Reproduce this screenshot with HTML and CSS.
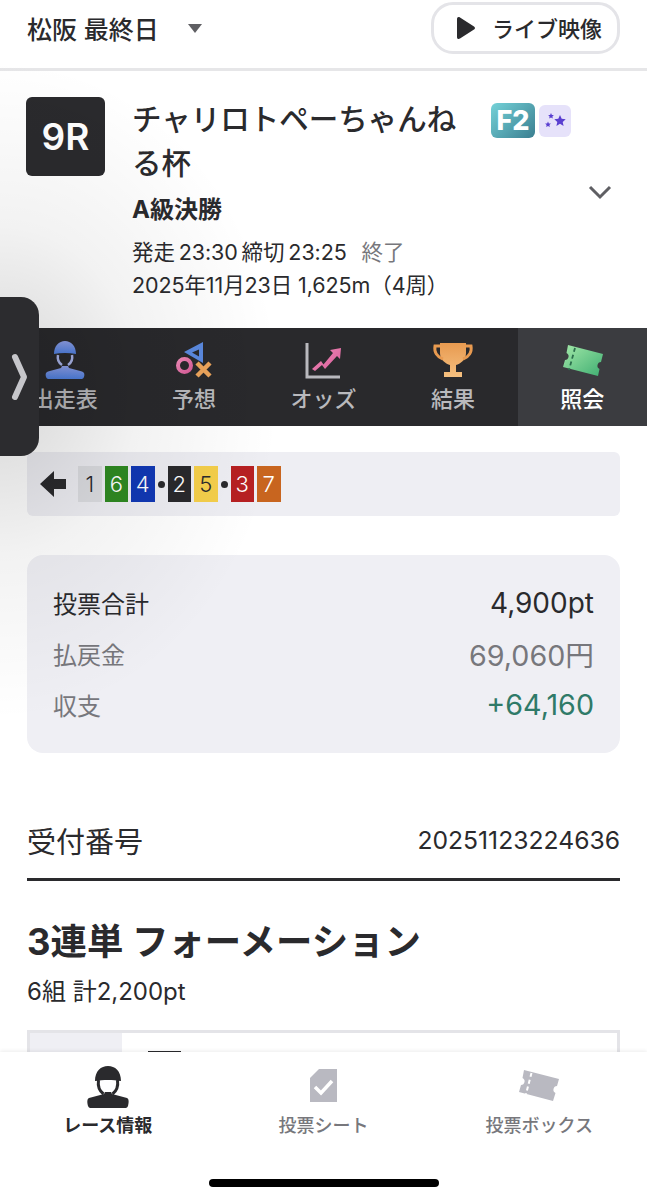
FILE: index.html
```html
<!DOCTYPE html>
<html lang="ja">
<head>
    <meta charset="utf-8">
    <title>レース情報</title>
    <link rel="stylesheet" href="styles.css">
</head>
<body>
<svg class="defs" width="0" height="0">
    <defs>
        <linearGradient id="g-blue" x1="0" y1="0" x2="0" y2="1"><stop offset="0" stop-color="#8fa0e8"/><stop offset="1" stop-color="#4f80e0"/></linearGradient>
        <linearGradient id="g-pink" x1="0" y1="0" x2="1" y2="1"><stop offset="0" stop-color="#f08ab8"/><stop offset="1" stop-color="#d85c98"/></linearGradient>
        <linearGradient id="g-orange" x1="0" y1="0" x2="0" y2="1"><stop offset="0" stop-color="#e89a50"/><stop offset="1" stop-color="#f5c080"/></linearGradient>
        <linearGradient id="g-green" x1="0" y1="0" x2="1" y2="1"><stop offset="0" stop-color="#a2e8a8"/><stop offset="1" stop-color="#3fae72"/></linearGradient>
    </defs>
</svg>

<div class="page">
    <header class="top">
        <div class="venue">松阪 最終日<span class="caret"></span></div>
        <div class="live">
            <svg width="20" height="24" viewBox="0 0 20 24"><path d="M1 3c0-2 1.500-2.500 3-1.600l14 9c1.300.8 1.300 2.400 0 3.200l-14 9c-1.500.9-3 .4-3-1.600z" fill="#2a2a2d"/></svg>
            <span>ライブ映像</span>
        </div>
    </header>

    <section class="race">
        <div class="race-no">9R</div>
        <div class="race-info">
            <h1 class="race-name">チャリロトペーちゃんねる杯</h1>
            <div class="race-grade">A級決勝</div>
            <div class="race-meta tight">発走 23:30 締切 23:25 <span class="ended">終了</span></div>
            <div class="race-meta">2025年11月23日 1,625m（4周）</div>
        </div>
        <div class="race-side">
            <div class="badges">
                <div class="badge-f2">F2</div>
                <div class="badge-star">
                    <svg width="24" height="18" viewBox="0 0 24 18" fill="#5a3fd0">
                        <path d="M17 3l1.700 3.800 4 .4-3 2.700.9 4-3.600-2.100-3.600 2.100.9-4-3-2.700 4-.4z"/>
                        <path d="M8 1l.9 1.900 2 .2-1.500 1.400.4 2L8 5.500 6.200 6.500l.4-2L5.100 3.100l2-.2z"/>
                        <path d="M5 9.500l.9 1.900 2 .2-1.500 1.400.4 2L5 14 3.200 15l.4-2-1.500-1.400 2-.2z"/>
                    </svg>
                </div>
            </div>
            <svg class="chevron" width="24" height="15" viewBox="0 0 24 15"><path d="M2 2l10 10L22 2" fill="none" stroke="#5f5f63" stroke-width="3"/></svg>
        </div>
    </section>

    <nav class="tabs">
        <div class="tab">
            <svg width="44" height="40" viewBox="0 0 44 40">
                <path d="M11 14C11 6 16 1 22 1s11 5 11 13c-7-1.500-15-1.500-22 0z" fill="url(#g-blue)"/>
                <path d="M15 15c-1 5 1 8 4 10M29 15c1 5-1 8-4 10" fill="none" stroke="#a9b4e8" stroke-width="2.500"/>
                <path d="M3 37c-1-3 0-5 2-5.500l13-3.500 1-2h6l1 2 13 3.500c2 .5 3 2.500 2 5.500-1 2-2 2-3 2H6c-1 0-2 0-3-2z" fill="url(#g-blue)"/>
            </svg>
            <span>出走表</span>
        </div>
        <div class="tab">
            <svg width="44" height="40" viewBox="0 0 44 40">
                <path d="M31 2v21L12 12z M27 9.500L20 12.500l7 4z" fill="#5b8ae0" fill-rule="evenodd"/>
                <circle cx="12.500" cy="25.500" r="6.500" fill="none" stroke="url(#g-pink)" stroke-width="4"/>
                <path d="M25 23l13 13M38 23L25 36" stroke="#eda55c" stroke-width="4.500" fill="none"/>
            </svg>
            <span>予想</span>
        </div>
        <div class="tab">
            <svg width="44" height="40" viewBox="0 0 44 40">
                <path d="M6 3v34h33" fill="none" stroke="#b9b9be" stroke-width="3"/>
                <path d="M11 29l9-8 2.500 3.500L32 13l-3-3 11-2-1 11-3-3-12 13-3-4-7 6z" fill="url(#g-pink)"/>
            </svg>
            <span>オッズ</span>
        </div>
        <div class="tab">
            <svg width="44" height="40" viewBox="0 0 44 40">
                <path d="M9 3h26v10c0 7-6 11-10 12v7h6v5H13v-5h6v-7C15 24 9 20 9 13z" fill="url(#g-orange)"/>
                <path d="M9 6H4c-1 6 2 11 8 13M35 6h5c1 6-2 11-8 13" fill="none" stroke="#e89a50" stroke-width="3"/>
            </svg>
            <span>結果</span>
        </div>
        <div class="tab active">
            <svg width="44" height="40" viewBox="0 0 44 40">
                <path d="M8 5l35 9-2 8c-2 0-3 1-3.500 3s.5 3 2 4L38 36 3 27l2-7c2 0 3-1 3.500-3s-.5-3-2-4z" fill="url(#g-green)"/>
                <path d="M15 8L9 30" stroke="#2a6e4c" stroke-width="1.800" stroke-dasharray="4 3"/>
            </svg>
            <span>照会</span>
        </div>
    </nav>

    <main class="content">
        <div class="combo">
            <svg class="back" width="27" height="26" viewBox="0 0 27 26"><path d="M0 13L14 0v8h12v10H14v8z" fill="#2a2a2d"/></svg>
            <span class="num n1">1</span>
            <span class="num n6">6</span>
            <span class="num n4">4</span>
            <span class="dot"></span>
            <span class="num n2">2</span>
            <span class="num n5">5</span>
            <span class="dot"></span>
            <span class="num n3">3</span>
            <span class="num n7">7</span>
        </div>

        <div class="summary">
            <div class="sum-row"><span>投票合計</span><span class="sum-val dark">4,900pt</span></div>
            <div class="sum-row muted"><span>払戻金</span><span class="sum-val">69,060円</span></div>
            <div class="sum-row muted"><span>収支</span><span class="sum-val plus">+64,160</span></div>
        </div>

        <div class="receipt">
            <span class="receipt-label">受付番号</span>
            <span class="receipt-no">20251123224636</span>
        </div>

        <h2 class="bet-title">3連単 フォーメーション</h2>
        <div class="bet-sub">6組 計2,200pt</div>

        <div class="bet-table">
            <div class="bet-head"></div>
            <div class="bet-cell"><span class="bet-box"></span></div>
        </div>
    </main>

    <div class="side-shade"></div>
    <div class="side-handle">
        <svg width="18" height="48" viewBox="0 0 18 48"><path d="M4 4l9 20-9 20" fill="none" stroke="#c6c6ca" stroke-width="6" stroke-linecap="round" stroke-linejoin="round"/></svg>
    </div>

    <footer class="bottom">
        <div class="bottom-tabs">
            <div class="bottom-tab on">
                <svg width="44" height="46" viewBox="0 0 44 46">
                    <path d="M9 17C9 7 15 2 22 2s13 5 13 15c-8-1.500-18-1.500-26 0z" fill="#2a2a2d"/>
                    <path d="M12.500 16c-1 7 1 11 5 14M31.500 16c1 7-1 11-5 14" fill="none" stroke="#2a2a2d" stroke-width="3"/>
                    <path d="M2 42c-1-4-1-7 1-8l15-4 1-2h6l1 2 15 4c2 1 2 4 1 8-1 2-2 2-3 2H5c-1 0-2 0-3-2z" fill="#2a2a2d"/>
                </svg>
                <span>レース情報</span>
            </div>
            <div class="bottom-tab">
                <svg width="44" height="46" viewBox="0 0 44 46">
                    <path d="M18 5h18v33H9V14z" fill="#b9b9c1"/>
                    <path d="M14 23l6 6 11-12" fill="none" stroke="#fff" stroke-width="3.500"/>
                </svg>
                <span>投票シート</span>
            </div>
            <div class="bottom-tab">
                <svg width="44" height="46" viewBox="0 0 44 46">
                    <path d="M7 6l35 9-2 7c-2 0-3 1-3.500 3s.5 3 2 4L36 37 2 28l2-7c2 0 3-1 3.500-3s-.5-3-2-4z" fill="#b9b9c1"/>
                    <path d="M14.500 9L9 30" stroke="#fff" stroke-width="2" stroke-dasharray="4 3"/>
                </svg>
                <span>投票ボックス</span>
            </div>
        </div>
        <div class="home-bar"></div>
    </footer>
</div>
</body>
</html>
```

FILE: styles.css
```css
html, body {
    margin: 0;
    padding: 0;
    background-color: #fff;
}

body {
    font-family: Inter, "Noto Sans CJK JP", sans-serif;
    color: #2a2a2d;
}

.defs {
    position: absolute;
}

.page {
    position: relative;
    width: 647px;
    height: 1200px;
    overflow: hidden;
}

/* top bar */
.top {
    display: flex;
    align-items: center;
    justify-content: space-between;
    height: 68px;
    padding: 0 27px;
    border-bottom: 3px solid #e6e6e8;
}

.venue {
    display: flex;
    align-items: center;
    font-size: 25px;
    font-weight: 500;
    margin-top: -12px;
}

.caret {
    width: 0;
    height: 0;
    margin-left: 29px;
    margin-top: 1px;
    border-left: 7px solid transparent;
    border-right: 7px solid transparent;
    border-top: 9px solid #5f5f63;
}

.live {
    display: flex;
    align-items: center;
    gap: 16px;
    width: 189px;
    height: 52px;
    box-sizing: border-box;
    padding-left: 22px;
    margin-top: -12px;
    border: 3px solid #e4e4e8;
    border-radius: 22px;
    font-size: 22px;
    font-weight: 500;
}

.live span {
    margin-top: -3px;
}

/* race header */
.race {
    display: flex;
    height: 257px;
    box-sizing: border-box;
    padding: 26px 27px 0 26px;
}

.race-no {
    flex: none;
    width: 79px;
    height: 79px;
    border-radius: 6px;
    background-color: #2a2a2d;
    color: #fff;
    text-align: center;
    line-height: 80px;
    font-size: 37px;
    font-weight: 600;
}

.race-info {
    width: 333px;
    margin-left: 27px;
}

.race-name {
    margin: 0;
    font-size: 29.5px;
    line-height: 44px;
    font-weight: 500;
}

.race-grade {
    font-size: 24px;
    line-height: 50px;
    font-weight: 700;
    margin-bottom: 1px;
}

.race-meta {
    font-size: 21.5px;
    line-height: 33px;
    white-space: nowrap;
    letter-spacing: -0.1px;
}

.tight {
    word-spacing: -2px;
}

.ended {
    margin-left: 11px;
    color: #77777c;
}

.race-side {
    flex: 1;
    padding-left: 26px;
}

.badges {
    display: flex;
    align-items: center;
    gap: 4px;
    margin-top: 6px;
}

.badge-f2 {
    width: 44px;
    height: 35px;
    border-radius: 6px;
    background: linear-gradient(135deg, #74d2d8, #3a7e90);
    color: #fff;
    text-align: center;
    font-size: 27px;
    line-height: 35px;
    font-weight: 800;
}

.badge-star {
    display: flex;
    align-items: center;
    justify-content: center;
    width: 32px;
    height: 32px;
    border-radius: 6px;
    background-color: #e6e2fa;
}

.chevron {
    display: block;
    margin: 47px 0 0 97px;
}

/* dark tabs */
.tabs {
    display: grid;
    grid-template-columns: repeat(5, 1fr);
    height: 98px;
    background-color: #29292c;
}

.tab {
    display: flex;
    flex-direction: column;
    align-items: center;
    padding-top: 12px;
    color: #b9b9bd;
    font-size: 22px;
    font-weight: 500;
}

.tab span {
    margin-top: 4px;
    line-height: 30px;
}

.tab.active {
    background-color: #3b3c40;
    color: #fff;
}

/* content */
.content {
    padding: 26px 27px 0;
}

.combo {
    display: flex;
    align-items: center;
    height: 64px;
    padding-left: 13px;
    border-radius: 6px;
    background-color: #eeeef3;
}

.back {
    margin-right: 11px;
}

.num {
    width: 23.5px;
    height: 36px;
    margin-right: 3px;
    text-align: center;
    font-size: 22px;
    font-weight: 300;
    line-height: 36px;
    color: #fff;
}

.n1 { background-color: #dcdde1; color: #2a2a2d; }
.n2 { background-color: #29292c; }
.n3 { background-color: #b72022; }
.n4 { background-color: #1138b5; }
.n5 { background-color: #f5cf4b; color: #2a2a2d; }
.n6 { background-color: #2f8a22; }
.n7 { background-color: #c8651f; }

.dot {
    width: 7px;
    height: 7px;
    margin-right: 3px;
    border-radius: 50%;
    background-color: #2a2a2d;
}

.summary {
    margin-top: 39px;
    padding: 22px 26px 23px 26px;
    border-radius: 16px;
    background-color: #efeff4;
}

.sum-row {
    display: flex;
    align-items: center;
    justify-content: space-between;
    height: 51px;
    font-size: 24px;
}

.muted {
    color: #77777c;
}

.sum-val {
    font-size: 28px;
}

.muted .sum-val {
    font-size: 28.7px;
}

.dark {
    color: #2a2a2d;
}

.plus {
    color: #2f7a68;
}

.receipt {
    display: flex;
    align-items: center;
    justify-content: space-between;
    height: 46px;
    margin-top: 64px;
    padding-bottom: 15px;
    border-bottom: 3px solid #2a2a2d;
}

.receipt-label {
    font-size: 29px;
}

.receipt-no {
    font-size: 24.7px;
}

.bet-title {
    margin: 36px 0 0;
    font-size: 36.4px;
    line-height: 50px;
    font-weight: 700;
}

.bet-sub {
    margin-top: 7px;
    font-size: 24px;
    line-height: 36px;
}

.bet-table {
    display: flex;
    height: 120px;
    margin-top: 20px;
    border: 3px solid #e4e4e8;
}

.bet-head {
    width: 92px;
    background-color: #efeff4;
}

.bet-cell {
    flex: 1;
    padding: 18px 0 0 26px;
}

.bet-box {
    display: block;
    width: 33px;
    height: 33px;
    background-color: #29292c;
}

/* shadow and drawer handle on the left edge */
.side-shade {
    position: absolute;
    left: 0;
    top: 60px;
    width: 280px;
    height: 660px;
    background: radial-gradient(ellipse 100% 50% at 0 50%, rgba(0, 0, 0, 0.16), rgba(0, 0, 0, 0.05) 50%, rgba(0, 0, 0, 0) 100%);
    pointer-events: none;
}

.side-handle {
    position: absolute;
    left: 0;
    top: 297px;
    display: flex;
    align-items: center;
    justify-content: center;
    width: 39px;
    height: 159px;
    border-radius: 0 18px 18px 0;
    background-color: #2c2c2f;
}

/* bottom bar */
.bottom {
    position: absolute;
    left: 0;
    right: 0;
    bottom: 0;
    height: 148px;
    background-color: #fff;
    box-shadow: 0 -1px 4px rgba(0, 0, 0, 0.08);
}

.bottom-tabs {
    display: grid;
    grid-template-columns: repeat(3, 1fr);
    padding-top: 12px;
}

.bottom-tab {
    display: flex;
    flex-direction: column;
    align-items: center;
    color: #77777c;
    font-size: 18px;
    font-weight: 500;
}

.bottom-tab span {
    margin-top: 3px;
    line-height: 26px;
}

.bottom-tab.on {
    color: #2a2a2d;
    font-weight: 700;
}

.home-bar {
    position: absolute;
    left: 209px;
    bottom: 13px;
    width: 230px;
    height: 8px;
    border-radius: 4px;
    background-color: #000;
}
```
